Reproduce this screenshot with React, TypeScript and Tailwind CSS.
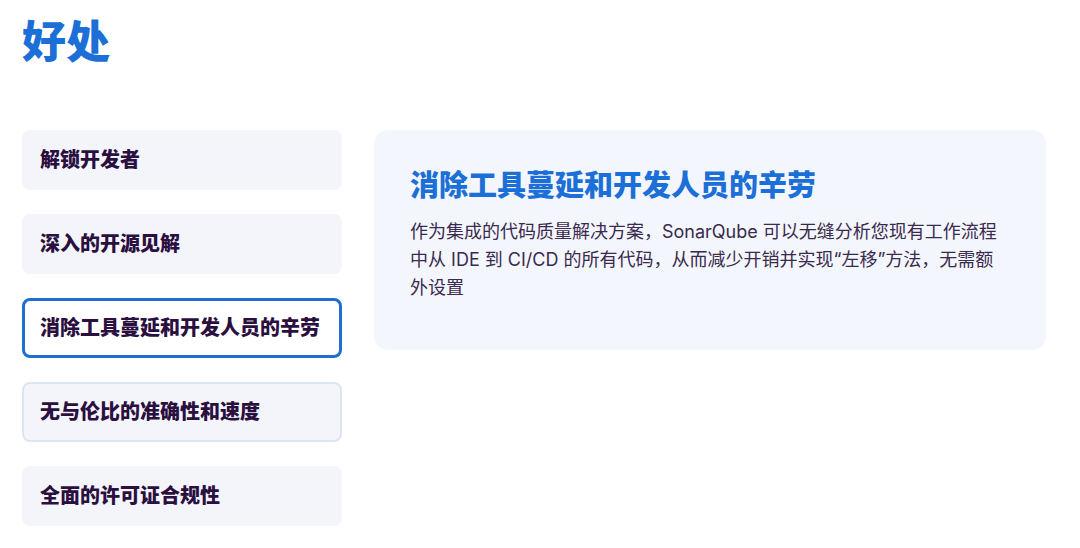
import React from "react";

const items = [
  "解锁开发者",
  "深入的开源见解",
  "消除工具蔓延和开发人员的辛劳",
  "无与伦比的准确性和速度",
  "全面的许可证合规性",
];

export default function App() {
  return (
    <div
      className="w-[1080px] h-[548px] bg-white overflow-hidden px-[22px] pt-[20px]"
      style={{ fontFamily: '"Inter", "Noto Sans CJK SC", sans-serif' }}
    >
      <h1 className="text-[44px] leading-none font-black text-[#1b6fd6]">好处</h1>
      <div className="mt-[66px] flex gap-[32px]">
        <div className="flex flex-col gap-[24px] w-[320px] shrink-0">
          {items.map((t, i) => {
            const selected = i === 2;
            const hover = i === 3;
            return (
              <div
                key={t}
                className={
                  "h-[60px] rounded-[8px] flex items-center text-[20px] font-black text-[#2a0f3f] " +
                  (selected
                    ? "bg-white border-[3px] border-[#1f6fd0] pl-[15px]"
                    : hover
                    ? "bg-[#f3f5fb] border-2 border-[#dde5f3] pl-[16px]"
                    : "bg-[#f3f5fb] pl-[18px]")
                }
              >
                {t}
              </div>
            );
          })}
        </div>
        <div className="w-[672px] h-[220px] rounded-[14px] bg-[#f3f6fc] px-[36px] pt-[36px]">
          <h2 className="text-[29px] leading-[40px] font-black text-[#1b6fd6]">
            消除工具蔓延和开发人员的辛劳
          </h2>
          <p className="mt-[12px] text-[18px] leading-[28px] text-[#3a2a4d]">
            作为集成的代码质量解决方案，SonarQube 可以无缝分析您现有工作流程中从 IDE 到 CI/CD 的所有代码，从而减少开销并实现“左移”方法，无需额外设置
          </p>
        </div>
      </div>
    </div>
  );
}
